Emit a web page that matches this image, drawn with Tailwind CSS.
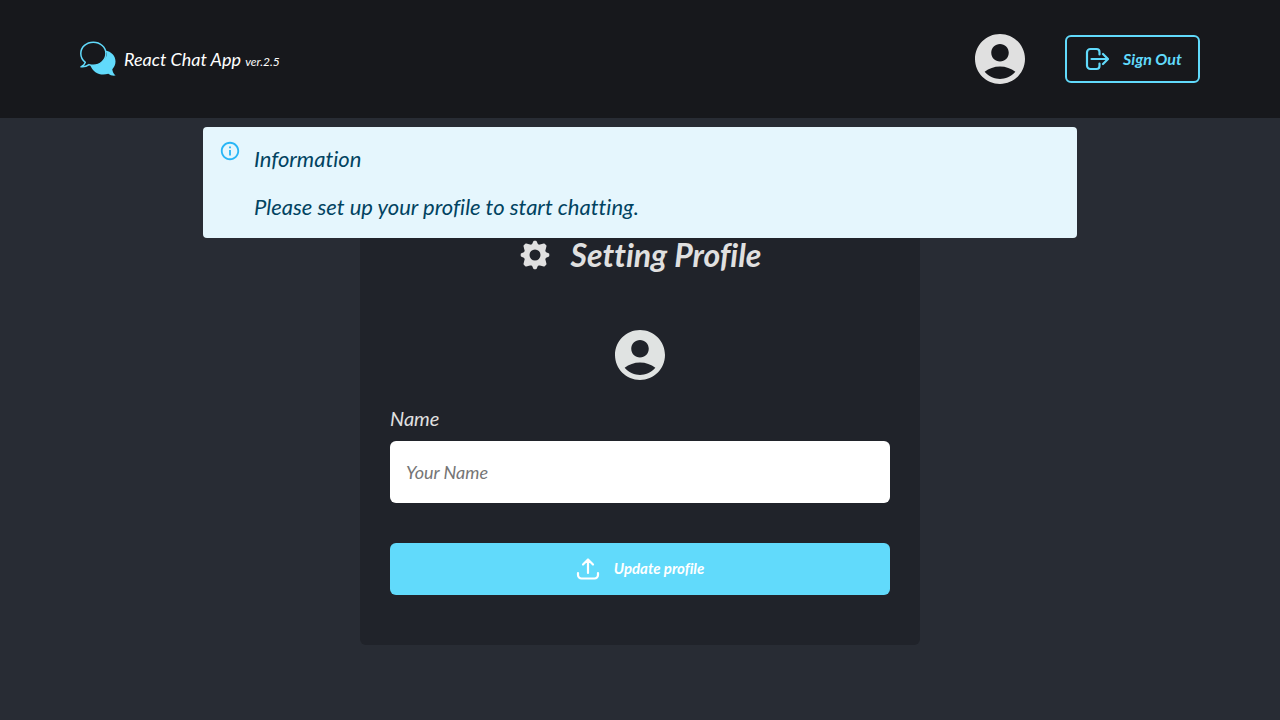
<!DOCTYPE html>
<html lang="en">
<head>
<meta charset="utf-8">
<meta name="viewport" content="width=device-width, initial-scale=1">
<title>React Chat App</title>
<script src="https://cdn.jsdelivr.net/npm/@tailwindcss/browser@4"></script>
</head>
<body class="relative flex min-h-screen flex-col bg-[#282c34] font-['Lato',sans-serif] text-[#e0e0e0] italic [font-variant-ligatures:none]">
  <header class="flex items-center justify-between bg-[#17181c] px-20 py-[34px]">
    <a href="#" class="flex items-center gap-2 text-white">
      <svg class="h-9 w-9" viewBox="0 0 36 36" aria-hidden="true">
        <path fill="#61dafb" d="M25 9.500C31.500 10.500 35.500 15 35.500 20.500c0 3-1.300 5.700-3.200 7.800.2 2.500 1.300 4.600 3.300 6.300-3 .4-5.400-.3-7.300-1.800-7 2.200-15 .2-18.500-9.500 9 .7 17-5 17-10.300 0-1.300-.8-2.500-1.800-3.500z"/>
        <path fill="#17181c" stroke="#61dafb" stroke-width="1.500" stroke-linejoin="round" d="M13.300 1.200C6.500 1.200.8 6 .8 12.500c0 4 1.900 6.800 4.500 8.900-.4 1.700-1.900 3-4.300 4.400 3.200.3 6-.6 8-2.200 1.300.4 2.800.6 4.300.6 6.900 0 12.600-5.300 12.600-11.700S20.200 1.200 13.300 1.200z"/>
      </svg>
      <span class="text-lg">React Chat App <span class="text-xs">ver.2.5</span></span>
    </a>
    <div class="flex items-center gap-10">
      <svg class="h-[50px] w-[50px]" viewBox="2 2 20 20" fill="#e0e0e0" role="img" aria-label="Profile picture">
        <path d="M12 2C6.480 2 2 6.480 2 12s4.480 10 10 10 10-4.480 10-10S17.520 2 12 2zm0 4c1.930 0 3.500 1.570 3.500 3.500S13.930 13 12 13s-3.500-1.570-3.500-3.500S10.070 6 12 6zm0 14c-2.030 0-4.430-.82-6.140-2.880C7.550 15.800 9.680 15 12 15s4.450.8 6.140 2.120C16.430 19.180 14.030 20 12 20z"/>
      </svg>
      <button type="button" class="flex h-12 w-[135px] items-center gap-[14px] rounded-md border-2 border-[#61dafb] pl-[18px] font-bold text-[#61dafb] italic">
        <svg class="h-6 w-6 shrink-0" viewBox="0 0 24 24" fill="none" stroke="#61dafb" stroke-width="2.200" stroke-linecap="round" stroke-linejoin="round" aria-hidden="true">
          <path d="M14.500 7.500V5a3 3 0 0 0-3-3H5.500A3.500 3.500 0 0 0 2 5.500v13A3.500 3.500 0 0 0 5.500 22h6a3 3 0 0 0 3-3v-2.500M6.500 12H23M18 7l5 5-5 5"/>
        </svg>
        <span class="text-base whitespace-nowrap">Sign Out</span>
      </button>
    </div>
  </header>

  <div role="alert" class="absolute inset-x-0 top-[127px] mx-auto flex w-[874px] max-w-full rounded bg-[#e5f6fd] px-4 pt-[13px] pb-3 text-[#014361]">
    <svg class="mr-[13px] h-[22px] w-[22px] shrink-0" viewBox="0 0 24 24" fill="#29b6f6" aria-hidden="true">
      <path d="M11 7h2v2h-2zM11 11h2v6h-2zM12 2C6.480 2 2 6.480 2 12s4.480 10 10 10 10-4.480 10-10S17.520 2 12 2zm0 18c-4.410 0-8-3.590-8-8s3.590-8 8-8 8 3.590 8 8-3.590 8-8 8z"/>
    </svg>
    <div class="flex flex-col gap-[10px]">
      <h2 class="text-[22px] leading-[38px]">Information</h2>
      <p class="text-[22px] leading-[38px]">Please set up your profile to start chatting.</p>
    </div>
  </div>

  <main class="flex flex-1 items-center justify-center">
    <form class="flex w-full max-w-[560px] flex-col rounded-md bg-[#20232a] px-[30px] pt-9 pb-[50px]">
      <h1 class="flex h-[50px] items-center justify-center gap-5 text-[32px] font-bold">
        <svg class="h-8 w-8" viewBox="0 0 32 32" aria-hidden="true">
          <path fill="#e0e0e0" fill-rule="evenodd" stroke="#e0e0e0" stroke-width="2" stroke-linejoin="round" d="M15.200 2.700h1.600Q18 6.800 20.200 6.700L25 5.500 26.500 7 25.300 11.800Q25.200 14 29.300 15.200v1.600Q25.200 18 25.300 20.200L26.500 25 25 26.500 20.200 25.300Q18 25.200 16.800 29.300h-1.600Q14 25.200 11.800 25.300L7 26.500 5.500 25 6.700 20.200Q6.800 18 2.700 16.800v-1.600Q6.800 14 6.700 11.800L5.500 7 7 5.500 11.800 6.700Q14 6.800 15.200 2.700zM16 9.500a6.500 6.500 0 1 0 0 13 6.500 6.500 0 1 0 0-13z"/>
        </svg>
        Setting Profile
      </h1>
      <svg class="mt-[50px] h-[50px] w-[50px] self-center" viewBox="2 2 20 20" fill="#e0e3e2" role="img" aria-label="Profile picture">
        <path d="M12 2C6.480 2 2 6.480 2 12s4.480 10 10 10 10-4.480 10-10S17.520 2 12 2zm0 4c1.930 0 3.500 1.570 3.500 3.500S13.930 13 12 13s-3.500-1.570-3.500-3.500S10.070 6 12 6zm0 14c-2.030 0-4.430-.82-6.140-2.880C7.550 15.800 9.680 15 12 15s4.450.8 6.140 2.120C16.430 19.180 14.030 20 12 20z"/>
      </svg>
      <label for="name" class="mt-5 mb-[5px] text-xl leading-9">Name</label>
      <input id="name" type="text" placeholder="Your Name" class="h-[62px] w-full rounded-md bg-white px-4 text-lg text-[#20232a] italic placeholder:text-[#757575]">
      <button type="submit" class="mt-10 flex h-[52px] w-full items-center justify-center gap-[14px] rounded-md bg-[#61dafb] text-[15px] font-bold text-white italic">
        <svg class="h-6 w-6" viewBox="0 0 24 24" fill="none" stroke="white" stroke-width="2.200" stroke-linecap="round" stroke-linejoin="round" aria-hidden="true">
          <path d="M12 16V2.500M7 7.500l5-5 5 5M2 16v2a3.500 3.500 0 0 0 3.500 3.500h13A3.500 3.500 0 0 0 22 18v-2"/>
        </svg>
        Update profile
      </button>
    </form>
  </main>
</body>
</html>
